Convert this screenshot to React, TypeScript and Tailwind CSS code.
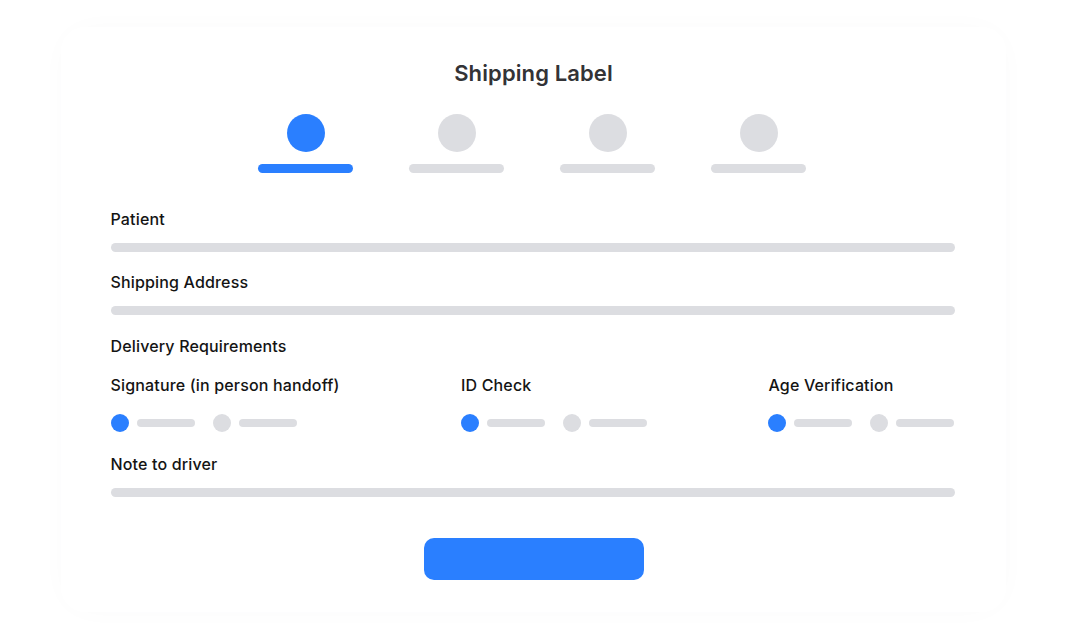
import React from "react";

const BLUE = "bg-[#2a7fff]";
const GRAY = "bg-[#dcdde1]";

const steps = [true, false, false, false];

const RadioPair: React.FC = () => (
  <div className="flex items-center gap-[18px] h-[18px]">
    <div className="flex items-center gap-2">
      <span className={`w-[18px] h-[18px] rounded-full ${BLUE}`} />
      <span className={`w-[58px] h-[8px] rounded-full ${GRAY}`} />
    </div>
    <div className="flex items-center gap-2">
      <span className={`w-[18px] h-[18px] rounded-full ${GRAY}`} />
      <span className={`w-[58px] h-[8px] rounded-full ${GRAY}`} />
    </div>
  </div>
);

const Field: React.FC<{ label: string; className?: string }> = ({
  label,
  className,
}) => (
  <div className={className}>
    <p className="text-[16px] leading-6 font-medium tracking-[0.01em] text-[#141414]">
      {label}
    </p>
    <div className={`mt-[12px] h-[9px] w-full rounded-full ${GRAY}`} />
  </div>
);

const App: React.FC = () => {
  const requirements = ["Signature (in person handoff)", "ID Check", "Age Verification"];
  return (
    <div
      className="w-[1067px] h-[642px] bg-white flex justify-center overflow-hidden"
      style={{ fontFamily: "Inter, 'Noto Sans', sans-serif" }}
    >
      <div className="mt-[27px] w-[945px] h-[585px] rounded-[24px] bg-white shadow-[0_0_36px_-14px_rgba(40,50,90,0.05)] flex flex-col items-center pt-[32px]">
        <h1 className="text-[22px] leading-7 font-semibold tracking-[0.005em] text-[#333336]">
          Shipping Label
        </h1>

        {/* stepper */}
        <div className="mt-[27px] flex gap-[56px] ml-[-3px]">
          {steps.map((active, i) => (
            <div key={i} className="flex flex-col items-center w-[95px]">
              <span
                className={`w-[38px] h-[38px] rounded-full ${active ? BLUE : GRAY}`}
              />
              <span
                className={`mt-[12px] w-[95px] h-[9px] rounded-full ${active ? BLUE : GRAY}`}
              />
            </div>
          ))}
        </div>

        <div className="w-[844px] mt-[34px] ml-[-2px]">
          <Field label="Patient" />
          <Field label="Shipping Address" className="mt-[18px]" />

          <p className="mt-[19px] text-[16px] leading-6 font-medium tracking-[0.01em] text-[#141414]">
            Delivery Requirements
          </p>
          <div className="mt-[15px] flex justify-between">
            {requirements.map((r) => (
              <div key={r} className="flex flex-col">
                <p className="text-[16px] leading-6 font-medium tracking-[0.01em] text-[#141414]">
                  {r}
                </p>
                <div className="mt-[17px]">
                  <RadioPair />
                </div>
              </div>
            ))}
          </div>

          <Field label="Note to driver" className="mt-[20px]" />
        </div>

        <button className={`mt-[41px] w-[220px] h-[42px] rounded-[10px] ${BLUE}`} />
      </div>
    </div>
  );
};

export default App;
